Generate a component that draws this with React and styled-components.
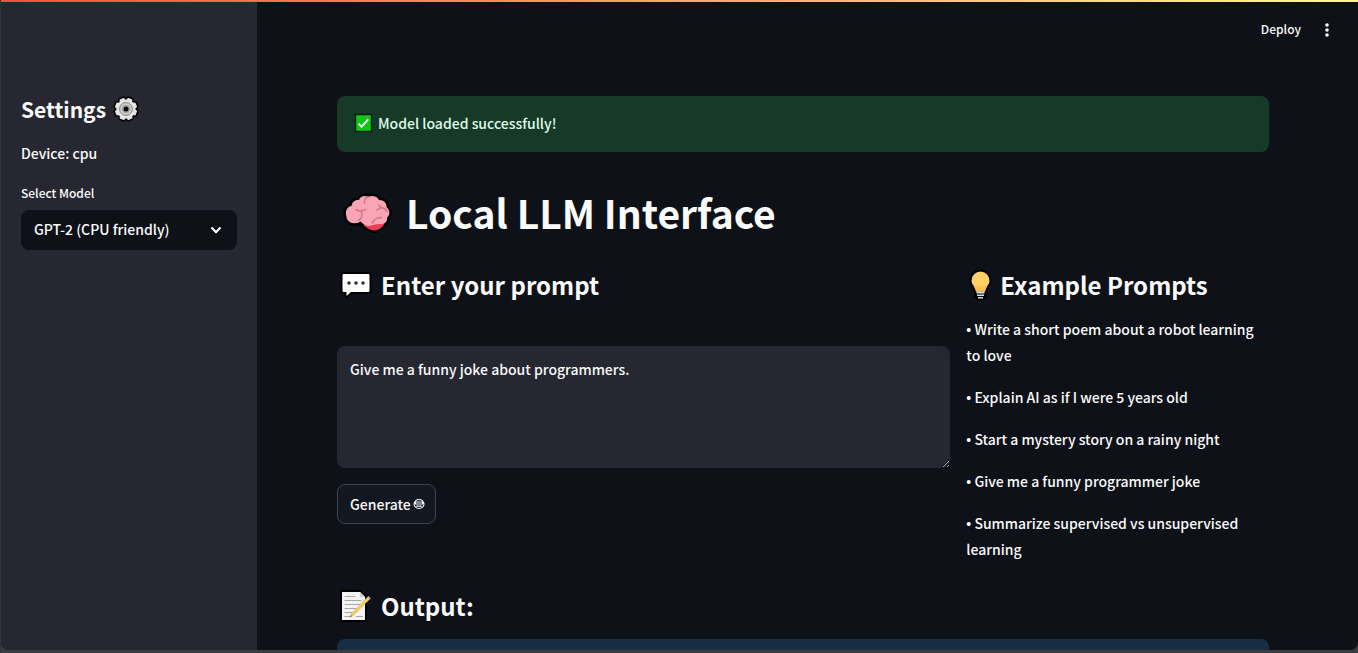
import React, { useState } from "react";
import styled, { createGlobalStyle } from "styled-components";

const GlobalStyle = createGlobalStyle`
  *, *::before, *::after { box-sizing: border-box; }
  html { color-scheme: dark; background: #3b3c3e; }
  body {
    margin: 0;
    color: #fafafa;
    font-family: "Noto Sans CJK SC", "Noto Sans", sans-serif;
    font-size: 14px;
    font-weight: 500;
    line-height: 26px;
  }
  h1, h2, h3, p { margin: 0; }
  button, select, textarea { font: inherit; color: inherit; }
`;

const Shell = styled.div`
  display: flex;
  flex-direction: column;
  height: 100vh;
  overflow: hidden;
  border-left: 1px solid #333438;
  border-bottom: 3px solid #3b3c3e;
`;

const Decoration = styled.div`
  flex: none;
  height: 2px;
  background: linear-gradient(90deg, #ff4b4b, #fffd80);
`;

const Body = styled.div`
  flex: 1;
  min-height: 0;
  display: flex;
  background: #0e1117;
  border-radius: 0 0 8px 8px;
  overflow: hidden;
`;

const Sidebar = styled.aside`
  flex: none;
  width: 256px;
  padding: 89px 20px 0;
  background: #262730;
`;

const SidebarTitle = styled.h2`
  display: flex;
  align-items: center;
  gap: 7px;
  font-size: 21px;
  line-height: 36px;
  font-weight: 700;
`;

const Device = styled.p`
  margin-top: 13px;
`;

const FieldLabel = styled.label`
  display: block;
  margin: 16px 0 6px;
  font-size: 12px;
  line-height: 22px;
`;

const SelectBox = styled.div`
  display: grid;
  align-items: center;
  > * { grid-area: 1 / 1; }
  > svg { justify-self: end; margin-right: 14px; pointer-events: none; }
`;

const Select = styled.select`
  appearance: none;
  width: 100%;
  height: 40px;
  padding: 0 36px 2px 13px;
  border: 0;
  border-radius: 8px;
  background: #0e1117;
`;

const Main = styled.main`
  flex: 1;
  min-width: 0;
  display: flex;
  flex-direction: column;
  overflow: hidden;
`;

const Toolbar = styled.header`
  flex: none;
  display: flex;
  align-items: center;
  justify-content: flex-end;
  gap: 16px;
  height: 54px;
  padding-right: 21px;
`;

const ToolButton = styled.button`
  display: flex;
  padding: 0;
  border: 0;
  background: none;
  font-size: 12px;
  line-height: 20px;
`;

const Content = styled.div`
  padding: 40px 89px 0 80px;
`;

const Alert = styled.div`
  display: flex;
  align-items: center;
  gap: 5px;
  min-height: 56px;
  padding: 14px 17px 16px;
  border-radius: 8px;
  background: ${(p) => (p.$kind === "success" ? "#173928" : "#172d43")};
  color: ${(p) => (p.$kind === "success" ? "#dffde9" : "#c7ebff")};
`;

const Title = styled.h1`
  display: flex;
  align-items: center;
  gap: 13px;
  margin-top: 34px;
  padding-left: 6px;
  font-size: 39px;
  line-height: 52px;
  font-weight: 700;
`;

const Columns = styled.div`
  display: flex;
  gap: 16px;
  margin: 29px 0 26px;
`;

const Column = styled.section`
  flex: 1 1 calc(${(p) => p.$share}% - 16px);
  min-width: 0;
`;

const Heading = styled.h3`
  display: flex;
  align-items: center;
  gap: 7px;
  padding-left: 3px;
  font-size: 24px;
  line-height: 36px;
  font-weight: 700;
`;

const Prompt = styled.textarea`
  display: block;
  width: 100%;
  height: 122px;
  margin: 43px 0 16px;
  padding: 12px 13px;
  border: 0;
  border-radius: 8px;
  background: #262730;
  line-height: 22px;
  resize: vertical;
`;

const GenerateButton = styled.button`
  display: inline-flex;
  align-items: center;
  gap: 2px;
  height: 40px;
  padding: 0 10px 0 12px;
  border: 1px solid #41434a;
  border-radius: 8px;
  background: #131720;
`;

const Examples = styled.div`
  display: flex;
  flex-direction: column;
  gap: 16px;
  margin-top: 13px;
`;

const Bullet = styled.span`
  font-family: "Liberation Sans", sans-serif;
  line-height: 1;
`;

const Output = styled.section`
  display: flex;
  flex-direction: column;
  gap: 15px;
`;

const teeth = [0, 45, 90, 135, 180, 225, 270, 315];

function GearIcon() {
  return (
    <svg width="26" height="26" viewBox="0 0 26 26" aria-hidden="true">
      <g stroke="#000" strokeWidth="4" strokeLinejoin="round">
        <circle cx="13" cy="13" r="8.5" />
        {teeth.map((a) => (
          <path key={a} d="M10.6 6 11.2 2.2h3.6l.6 3.8z" transform={`rotate(${a + 22} 13 13)`} />
        ))}
      </g>
      <g fill="#e4e4e4">
        <circle cx="13" cy="13" r="9.6" />
        {teeth.map((a) => (
          <path key={a} d="M9.6 6 10.6 1.9h4.8l1 4.1z" transform={`rotate(${a + 22} 13 13)`} />
        ))}
      </g>
      <circle cx="13" cy="13" r="6.4" fill="#cfcfcf" stroke="#858585" strokeWidth="1" />
      <circle cx="13" cy="13" r="4.2" fill="#a6a6a6" />
      <circle cx="13" cy="13" r="2.5" fill="#080808" />
    </svg>
  );
}

function ChevronIcon() {
  return (
    <svg width="14" height="14" viewBox="0 0 14 14" fill="none" stroke="#fafafa" strokeWidth="2" strokeLinecap="round" strokeLinejoin="round" aria-hidden="true">
      <path d="M3 5l4 4.2L11 5" />
    </svg>
  );
}

function DotsIcon() {
  return (
    <svg width="20" height="20" viewBox="0 0 20 20" fill="#fafafa" aria-hidden="true">
      <circle cx="10" cy="6" r="1.8" />
      <circle cx="10" cy="11" r="1.8" />
      <circle cx="10" cy="16" r="1.8" />
    </svg>
  );
}

function CheckIcon() {
  return (
    <svg width="19" height="20" viewBox="0 0 19 20" aria-hidden="true">
      <rect x="1.500" y="1.500" width="16" height="17" fill="#10c41c" stroke="#031c06" strokeWidth="1.400" />
      <path d="M4.600 10.600l3 3L14.200 6.400" fill="none" stroke="#f4fff4" strokeWidth="1.800" />
    </svg>
  );
}

const brainShape =
  "M16 8C17 4.500 22 3 25 5C29 3 34 4 36 8C40 7.500 44 11 43.500 15C47 18 47.500 23 44 25.500C45 29 42.500 32 39.500 32.500C38.500 37 33 39.500 28.500 38C25.500 37 24 35 21 33.500C18 31.500 16.500 31 13 31C8 32 3.500 29 3.500 24.500C1.500 19 4.500 14.500 8.500 14C9 10 12 7.500 16 8Z";

function BrainIcon() {
  return (
    <svg width="50" height="44" viewBox="0 -2 50 44" aria-hidden="true">
      <path d={brainShape} fill="#000" stroke="#000" strokeWidth="5" strokeLinejoin="round" />
      <path d="M21 31.500C27 33 34 30 41.500 31C39.500 37 33 39.500 28.500 38C25.500 37 23.500 35.500 21 33.500Z" fill="#ee3e56" />
      <path
        d="M16 8C17 4.500 22 3 25 5C29 3 34 4 36 8C40 7.500 44 11 43.500 15C47 18 47.500 23 44 25.500C45 29 42 31.500 39 32C33 31.500 30 33.500 25.500 34C22 34 20 31.500 17.500 29.500C16.500 31 14 31 13 31C8 32 3.500 29 3.500 24.500C1.500 19 4.500 14.500 8.500 14C9 10 12 7.500 16 8Z"
        fill="#f8a6b6"
      />
      <g fill="none" stroke="#d97788" strokeWidth="1.700" strokeLinecap="round">
        <path d="M21.500 11C20.500 7.500 23 5.500 25.500 5" />
        <path d="M13 17.500C16.500 20.500 20 18.500 22.500 17.500M18.500 20C19.500 24 18.500 27 15.500 28.500" />
        <path d="M36 13C38 14 38 16.500 34 18M38 16C41 15.500 42.500 17 44 19.500" />
        <path d="M29.500 31C30 28 34 25.500 38.500 25.500" />
      </g>
    </svg>
  );
}

function SpeechIcon() {
  return (
    <svg width="34" height="30" viewBox="0 0 34 30" aria-hidden="true">
      <path d="M3.500 4h25a1 1 0 0 1 1 1v16a1 1 0 0 1-1 1H11l-4.500 4v-4h-3a1 1 0 0 1-1-1V5a1 1 0 0 1 1-1z" fill="#fff" stroke="#000" strokeWidth="4" strokeLinejoin="round" paintOrder="stroke" />
      <g fill="#303236">
        <circle cx="9" cy="13" r="1.800" />
        <circle cx="16" cy="13" r="1.800" />
        <circle cx="23" cy="13" r="1.800" />
      </g>
    </svg>
  );
}

function BulbIcon() {
  return (
    <svg width="24" height="32" viewBox="0 0 24 32" aria-hidden="true">
      <path d="M11.500 2.500a9 9 0 0 1 9 9c0 5-4.500 6.500-4.500 11.500v4.500l-2.500 2h-4L7 27.500V23c0-5-4.500-6.500-4.500-11.500a9 9 0 0 1 9-9z" stroke="#000" strokeWidth="4" strokeLinejoin="round" />
      <path d="M11.500 2.500a9 9 0 0 1 9 9c0 5-4.500 6-4.500 11H7c0-5-4.500-6-4.500-11a9 9 0 0 1 9-9z" fill="#ffd067" />
      <path d="M4.500 16c4 2 10 2 14 0L16 22.500H7z" fill="#fbbf4d" />
      <path d="M7.500 22.500h8v2h-8zM8 25.500h7v1.600H8zM9 28h5v1.500H9z" fill="#dcdcdc" />
    </svg>
  );
}

function MemoIcon() {
  return (
    <svg width="34" height="32" viewBox="0 0 34 32" aria-hidden="true">
      <path d="M2 2h18l5 5v23H2z" fill="#f3f3f3" stroke="#000" strokeWidth="4" strokeLinejoin="round" paintOrder="stroke" />
      <path d="M20 2l5 5h-5z" fill="#cfcfcf" />
      <path d="M4.500 6.500h11M4.500 10.500h17M4.500 14.500h16M4.500 18.500h12M4.500 22.500h8M4.500 26.500h6M16 26.500h7" stroke="#a8a8a8" strokeWidth="1" />
      <path d="M10 27l1.500-3.500L27.500 7l2.200 2.200L13.500 25.300z" fill="#f7cd5d" stroke="#c79a45" strokeWidth=".4" />
      <path d="M27 7.500l1.500-1.500 2.200 2.200L29.200 9.700z" fill="#e7a7a0" />
      <path d="M10 27l.8-1.800 1.100 1z" fill="#55483a" />
    </svg>
  );
}

function FaceIcon() {
  return (
    <svg width="12" height="12" viewBox="0 0 12 12" fill="none" stroke="#fafafa" aria-hidden="true">
      <ellipse cx="6" cy="6" rx="5" ry="4.500" strokeWidth="1.100" />
      <rect x="2.500" y="4" width="7" height="2" strokeWidth="1" />
      <path d="M1 5h1.500M9.500 5H11M3.300 8.200h5.400" strokeWidth="1.300" />
    </svg>
  );
}

const examples = [
  "Write a short poem about a robot learning to love",
  "Explain AI as if I were 5 years old",
  "Start a mystery story on a rainy night",
  "Give me a funny programmer joke",
  "Summarize supervised vs unsupervised learning",
];

export default function App() {
  const [prompt, setPrompt] = useState("Give me a funny joke about programmers.");

  return (
    <>
      <GlobalStyle />
      <Shell>
        <Decoration />
        <Body>
          <Sidebar>
            <SidebarTitle>
              Settings <GearIcon />
            </SidebarTitle>
            <Device>Device: cpu</Device>
            <FieldLabel htmlFor="model">Select Model</FieldLabel>
            <SelectBox>
              <Select id="model">
                <option>GPT-2 (CPU friendly)</option>
              </Select>
              <ChevronIcon />
            </SelectBox>
          </Sidebar>
          <Main>
            <Toolbar>
              <ToolButton>Deploy</ToolButton>
              <ToolButton aria-label="Main menu">
                <DotsIcon />
              </ToolButton>
            </Toolbar>
            <Content>
              <Alert $kind="success">
                <CheckIcon />
                Model loaded successfully!
              </Alert>
              <Title>
                <BrainIcon />
                Local LLM Interface
              </Title>
              <Columns>
                <Column $share={66.6667}>
                  <Heading>
                    <SpeechIcon />
                    Enter your prompt
                  </Heading>
                  <Prompt aria-label="Prompt" value={prompt} onChange={(e) => setPrompt(e.target.value)} />
                  <GenerateButton>
                    Generate
                    <FaceIcon />
                  </GenerateButton>
                </Column>
                <Column $share={33.3333}>
                  <Heading>
                    <BulbIcon />
                    Example Prompts
                  </Heading>
                  <Examples>
                    {examples.map((text) => (
                      <p key={text}>
                        <Bullet>•</Bullet> {text}
                      </p>
                    ))}
                  </Examples>
                </Column>
              </Columns>
              <Output>
                <Heading>
                  <MemoIcon />
                  Output:
                </Heading>
                <Alert $kind="info" />
              </Output>
            </Content>
          </Main>
        </Body>
      </Shell>
    </>
  );
}
